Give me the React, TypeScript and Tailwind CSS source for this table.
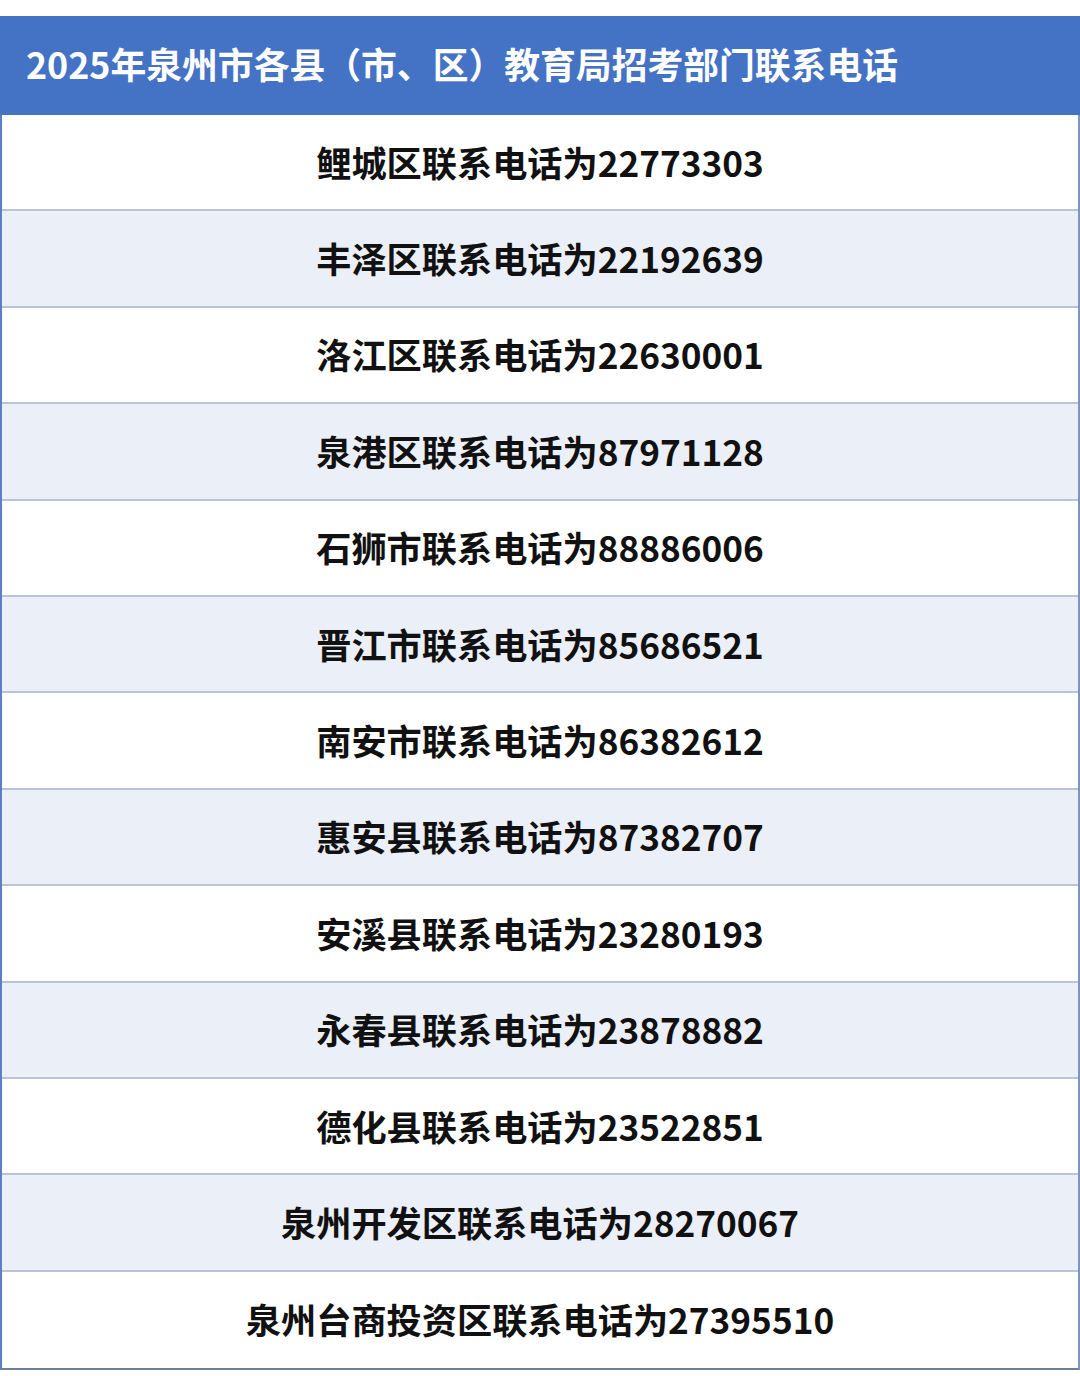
const rows = [
  "鲤城区联系电话为22773303",
  "丰泽区联系电话为22192639",
  "洛江区联系电话为22630001",
  "泉港区联系电话为87971128",
  "石狮市联系电话为88886006",
  "晋江市联系电话为85686521",
  "南安市联系电话为86382612",
  "惠安县联系电话为87382707",
  "安溪县联系电话为23280193",
  "永春县联系电话为23878882",
  "德化县联系电话为23522851",
  "泉州开发区联系电话为28270067",
  "泉州台商投资区联系电话为27395510",
];

export default function App() {
  return (
    <div
      className="w-[1080px] h-[1376px] bg-white pt-[16px]"
      style={{ fontFamily: '"Noto Sans CJK SC", "Noto Sans", sans-serif' }}
    >
      <div className="h-[99px] bg-[#4472c4] flex items-center pl-[26px] pb-[4px]">
        <h1 className="text-[35.8px] font-bold text-white leading-none">
          2025年泉州市各县（市、区）教育局招考部门联系电话
        </h1>
      </div>
      <div className="border-l-2 border-r-2 border-l-[#5b7fc4] border-r-[#7d95c4] border-b-2 border-b-[#6b7f9f]">
        {rows.map((text, i) => (
          <div
            key={text}
            className={`h-[96.4px] flex items-center justify-center pb-[2px] ${
              i < rows.length - 1 ? "border-b-2 border-[#b9c4d6]" : ""
            } ${i % 2 === 1 ? "bg-[#ebeff8]" : "bg-white"}`}
          >
            <span className="text-[35.2px] font-bold text-[#111111] leading-none">{text}</span>
          </div>
        ))}
      </div>
    </div>
  );
}
